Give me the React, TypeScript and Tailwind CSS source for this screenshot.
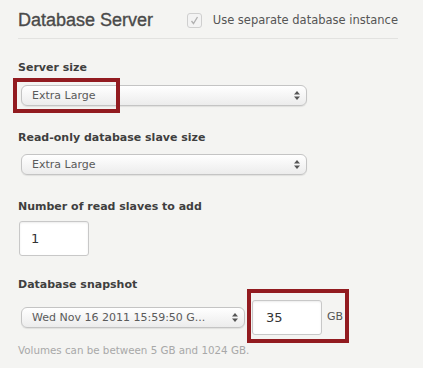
import React from "react";

const body = { fontFamily: '"DejaVu Sans", "Liberation Sans", sans-serif' };

function Arrows() {
  return (
    <svg width="6" height="9" viewBox="0 0 6 9" className="shrink-0">
      <path d="M3 0 L6 3.5 L0 3.5 Z" fill="#555" />
      <path d="M0 5.5 L6 5.5 L3 9 Z" fill="#555" />
    </svg>
  );
}

function Select({ text, width }: { text: string; width: string }) {
  return (
    <div
      className={`${width} h-[21px] ml-[3px] flex items-center justify-between pl-[10px] pr-[6px] rounded-[6px] border border-[#c4c4c4] bg-gradient-to-b from-[#ffffff] to-[#ececec] shadow-[0_1px_1px_rgba(0,0,0,0.08)] text-[11px] text-[#5a5a5a]`}
    >
      <span className="whitespace-nowrap leading-none">{text}</span>
      <Arrows />
    </div>
  );
}

function Label({ children, mt }: { children: React.ReactNode; mt: string }) {
  return (
    <div className={`${mt} h-[14px] leading-[14px] text-[11px] font-bold text-[#3f3f3f] whitespace-nowrap`}>
      {children}
    </div>
  );
}

export default function App() {
  return (
    <div className="relative w-[423px] h-[368px] overflow-hidden bg-[#f4f4f2] pl-[18px]" style={body}>
      {/* header */}
      <div className="w-[380px] pt-[9px] pb-[7px] border-b border-[#e2e2e0] flex items-center">
        <div
          className="w-[169px] h-[22px] leading-[22px] text-[18px] text-[#4a4a4a] whitespace-nowrap"
          style={{ fontFamily: '"Liberation Sans", Arial, sans-serif', WebkitTextStroke: "0.35px #4a4a4a" }}
        >
          Database Server
        </div>
        <div className="w-[15px] h-[15px] rounded-[3px] border border-[#cfcfcf] bg-[#f3f3f3] flex items-center justify-center">
          <svg width="9" height="9" viewBox="0 0 9 9">
            <path d="M1.5 5 L3.5 7.5 L7.5 1" fill="none" stroke="#b0b0b0" strokeWidth="1.3" />
          </svg>
        </div>
        <div className="ml-[11px] text-[11.5px] leading-[14px] text-[#555] whitespace-nowrap">
          Use separate database instance
        </div>
      </div>

      <Label mt="mt-[22px]">Server size</Label>
      <div className="mt-[10px]">
        <Select text="Extra Large" width="w-[286px]" />
      </div>

      <Label mt="mt-[25px]">Read-only database slave size</Label>
      <div className="mt-[9px]">
        <Select text="Extra Large" width="w-[286px]" />
      </div>

      <Label mt="mt-[25px]">Number of read slaves to add</Label>
      <div className="mt-[7px] w-[70px] h-[35px] ml-[1px] rounded-[3px] border border-[#c8c8c8] bg-white shadow-[inset_0_1px_2px_rgba(0,0,0,0.08)] flex items-center pl-[11px] text-[13px] text-[#333]">
        1
      </div>

      <Label mt="mt-[22px]">Database snapshot</Label>
      <div className="mt-[8px] flex items-center h-[35px]">
        <Select text="Wed Nov 16 2011 15:59:50 G..." width="w-[224px]" />
        <div className="ml-[7px] w-[70px] h-[35px] rounded-[3px] border border-[#c8c8c8] bg-white shadow-[inset_0_1px_2px_rgba(0,0,0,0.08)] flex items-center pl-[13px] text-[13px] text-[#333]">
          35
        </div>
        <div className="ml-[5px] text-[11px] text-[#555]">GB</div>
      </div>

      <div className="mt-[9px] text-[10.3px] leading-[12px] text-[#a8a8a8] whitespace-nowrap">
        Volumes can be between 5 GB and 1024 GB.
      </div>

      {/* annotation boxes */}
      <div className="absolute left-[13px] top-[78px] w-[107px] h-[35px] border-[4px] border-[#921b20]" />
      <div className="absolute left-[247px] top-[289px] w-[102px] h-[54px] border-[4px] border-[#921b20]" />
    </div>
  );
}
